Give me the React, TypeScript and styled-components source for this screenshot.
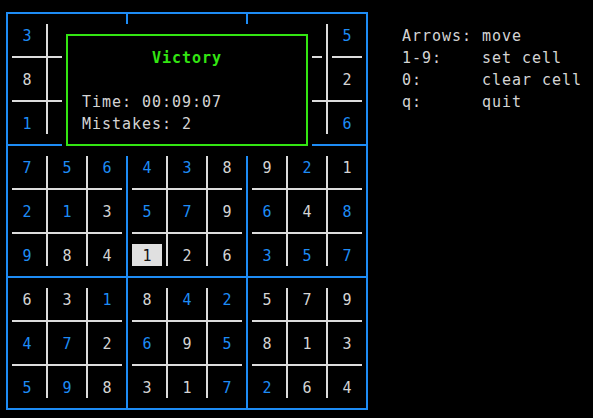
import styled, { createGlobalStyle } from "styled-components";

const BLUE = "#1e8cf5";
const LINE = "#dcdcdc";
const TEXT = "#d4d4d4";
const GREEN = "#33e612";

const GlobalStyle = createGlobalStyle`
    html, body {
        margin: 0;
        padding: 0;
        background: #000;
    }
    #root {
        min-height: 100vh;
        background: #000;
    }
`;

const Screen = styled.div`
    display: flex;
    flex-direction: row;
    align-items: flex-start;
    gap: 34px;
    padding: 12px 0 0 6px;
    font-family: "DejaVu Sans Mono", "Liberation Mono", monospace;
    font-size: 15px;
    line-height: 22px;
    letter-spacing: 0.97px;
    color: ${TEXT};
`;

const Frame = styled.div`
    position: relative;
    display: grid;
    grid-template-columns: repeat(3, 118px);
    grid-template-rows: repeat(3, 130px);
    gap: 2px;
    background: ${BLUE};
    border: 2px solid ${BLUE};
`;

const Box = styled.div`
    background: #000;
    padding: 10px 4px;
`;

// horizontal line segments, the notched one breaks around the crossing
const hLine = (notch: boolean, y: number) =>
    notch
        ? [
              { size: "70px 2px", pos: `0 ${y}px` },
              { size: "30px 2px", pos: `80px ${y}px` },
          ]
        : [{ size: "100% 2px", pos: `0 ${y}px` }];

const InnerGrid = styled.div<{ $notch?: boolean }>`
    display: grid;
    grid-template-columns: repeat(3, 30px);
    grid-template-rows: repeat(3, 22px);
    column-gap: 10px;
    row-gap: 22px;
    width: 110px;
    height: 110px;
    ${({ $notch }) => {
        const segs = [
            { size: "2px 100%", pos: "34px 0" },
            { size: "2px 100%", pos: "74px 0" },
            ...hLine(!!$notch, 32),
            ...hLine(false, 76),
        ];
        return `
            background-image: ${segs.map(() => `linear-gradient(${LINE}, ${LINE})`).join(", ")};
            background-size: ${segs.map((s) => s.size).join(", ")};
            background-position: ${segs.map((s) => s.pos).join(", ")};
            background-repeat: no-repeat;
        `;
    }}
`;

const Cell = styled.div<{ $user?: boolean; $selected?: boolean }>`
    display: flex;
    justify-content: center;
    align-items: center;
    padding: 1px 0 0 1px;
    color: ${({ $user, $selected }) => ($selected ? "#111" : $user ? BLUE : TEXT)};
    background: ${({ $selected }) => ($selected ? "#e0e0e0" : "transparent")};
`;

const Overlay = styled.div`
    position: absolute;
    left: 54px;
    top: 10px;
    width: 250px;
    height: 132px;
    box-sizing: border-box;
    padding: 10px 4px;
    background: #000;
`;

const Dialog = styled.div`
    height: 100%;
    box-sizing: border-box;
    border: 2px solid ${GREEN};
    padding: 11px 14px 0;
    display: flex;
    flex-direction: column;
`;

const Title = styled.div`
    text-align: center;
    font-weight: bold;
    color: ${GREEN};
    margin-bottom: 22px;
`;

const Line = styled.div`
    white-space: pre;
`;

const Help = styled.div`
    margin-top: 13px;
    display: flex;
    flex-direction: column;
`;

// g = given, u = entered by the player (blue), s = selected, .. = under the dialog
const rows: string[] = [
    "3u .. .. | .. .. .. | .. .. 5u",
    "8g .. .. | .. .. .. | .. .. 2g",
    "1u .. .. | .. .. .. | .. .. 6u",
    "7u 5u 6u | 4u 3u 8g | 9g 2u 1g",
    "2u 1u 3g | 5u 7u 9g | 6u 4g 8u",
    "9u 8g 4g | 1s 2g 6g | 3u 5u 7u",
    "6g 3g 1u | 8g 4u 2u | 5g 7g 9g",
    "4u 7u 2g | 6u 9g 5u | 8g 1g 3g",
    "5u 9u 8g | 3g 1g 7u | 2u 6g 4g",
];

const parsed = rows.map((r) =>
    r
        .replace(/\|/g, "")
        .split(/\s+/)
        .filter(Boolean)
        .map((t) => ({ n: t[0] == "." ? "" : t[0], kind: t[1] }))
);

const boxCells = (br: number, bc: number) => {
    const out: { n: string; kind: string }[] = [];
    for (let r = 0; r < 3; r++) {
        for (let c = 0; c < 3; c++) {
            out.push(parsed[br * 3 + r][bc * 3 + c]);
        }
    }
    return out;
};

const App = () => {
    return (
        <>
            <GlobalStyle />
            <Screen>
                <Frame>
                    {[0, 1, 2].map((br) =>
                        [0, 1, 2].map((bc) => (
                            <Box key={`${br}-${bc}`}>
                                <InnerGrid $notch={br == 0 && bc == 2}>
                                    {boxCells(br, bc).map((cell, idx) => (
                                        <Cell
                                            key={idx}
                                            $user={cell.kind == "u"}
                                            $selected={cell.kind == "s"}
                                        >
                                            {cell.n}
                                        </Cell>
                                    ))}
                                </InnerGrid>
                            </Box>
                        ))
                    )}

                    <Overlay>
                        <Dialog>
                            <Title>Victory</Title>
                            <Line>Time: 00:09:07</Line>
                            <Line>Mistakes: 2</Line>
                        </Dialog>
                    </Overlay>
                </Frame>

                <Help>
                    <Line>Arrows: move</Line>
                    <Line>1-9:    set cell</Line>
                    <Line>0:      clear cell</Line>
                    <Line>q:      quit</Line>
                </Help>
            </Screen>
        </>
    );
};

export default App;
